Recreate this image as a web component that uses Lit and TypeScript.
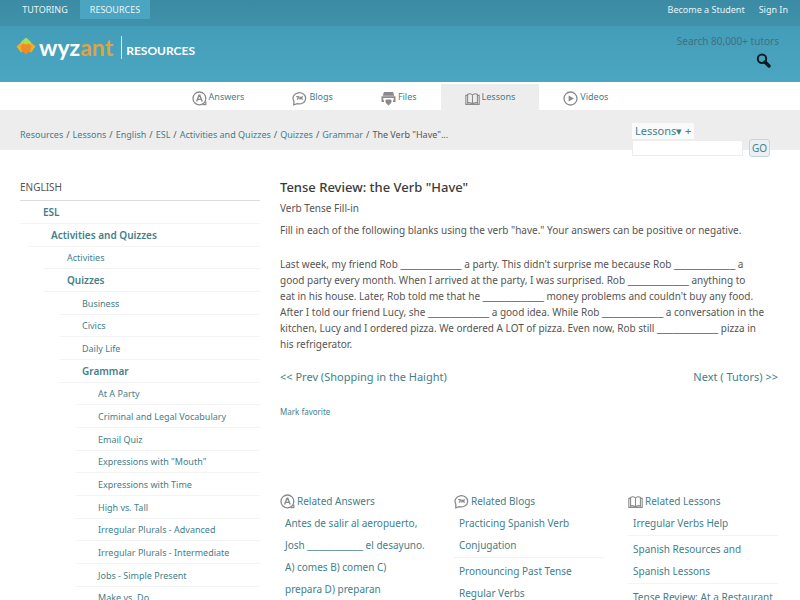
import { LitElement, html, css, svg } from "lit";
import { customElement } from "lit/decorators.js";

type Row = [level: number, label: string, bold?: boolean];

const ROWS: Row[] = [
  [0, "ESL", true],
  [1, "Activities and Quizzes", true],
  [2, "Activities"],
  [2, "Quizzes", true],
  [3, "Business"],
  [3, "Civics"],
  [3, "Daily Life"],
  [3, "Grammar", true],
  [4, "At A Party"],
  [4, "Criminal and Legal Vocabulary"],
  [4, "Email Quiz"],
  [4, "Expressions with \"Mouth\""],
  [4, "Expressions with Time"],
  [4, "High vs. Tall"],
  [4, "Irregular Plurals - Advanced"],
  [4, "Irregular Plurals - Intermediate"],
  [4, "Jobs - Simple Present"],
  [4, "Make vs. Do"],
];

const CRUMBS = ["Resources", "Lessons", "English", "ESL", "Activities and Quizzes", "Quizzes", "Grammar"];

const STORY = [
  "Last week, my friend Rob ___________ a party. This didn't surprise me because Rob ___________ a",
  "good party every month. When I arrived at the party, I was surprised. Rob ___________ anything to",
  "eat in his house. Later, Rob told me that he ___________ money problems and couldn't buy any food.",
  "After I told our friend Lucy, she ___________ a good idea. While Rob ___________ a conversation in the",
  "kitchen, Lucy and I ordered pizza. We ordered A LOT of pizza. Even now, Rob still ___________ pizza in",
  "his refrigerator.",
];

const RELATED = [
  { icon: "answers", title: "Related Answers", items: [["Antes de salir al aeropuerto,", "Josh __________ el desayuno.", "A) comes B) comen C)", "prepara D) preparan"]] },
  { icon: "blogs", title: "Related Blogs", items: [["Practicing Spanish Verb", "Conjugation"], ["Pronouncing Past Tense", "Regular Verbs"]] },
  { icon: "lessons", title: "Related Lessons", items: [["Irregular Verbs Help"], ["Spanish Resources and", "Spanish Lessons"], ["Tense Review: At a Restaurant"]] },
];

const SHAPES: Record<string, unknown> = {
  answers: svg`<circle cx="7.4" cy="7.4" r="6.4"/><path d="M10.6 13.6H13.8V10.4"/><path d="M4.6 10.6 7 4.2h.8l2.4 6.4M5.6 8.4h3.6" stroke-width="1.4"/>`,
  blogs: svg`<path d="M1.8 13.8V10A6.3 5.6 0 1 1 5.2 12.6Z"/><path d="M4.2 5.6h2v1.6L5.2 8.6M7.9 5.4v3.2M10.8 5.6 8.4 7l2.4 1.4" stroke-width="1.3"/>`,
  files: svg`<path d="M3.4 1.6h8.2l.8 2.6H2.6z" fill="currentColor"/><path d="M3 10.2H1.4V6.2h12.2v4H12" stroke-width="1.8"/><path d="M5 9h5v2.6L7.5 14 5 11.6z" fill="currentColor" stroke-width="1"/>`,
  lessons: svg`<path d="M7.5 4V13M7.5 4C6.2 2.6 3.8 2.6 2.6 3.4V12C4 11.4 6 11.6 7.5 13 9 11.6 11 11.4 12.4 12V3.4C11.2 2.6 8.8 2.6 7.5 4M2.6 4.4H.8V13.4H14.2V4.4H12.4" stroke-width="1.1"/>`,
  videos: svg`<circle cx="7.5" cy="7.5" r="6.5"/><path d="M5.6 4.4 11 7.5 5.6 10.6z" fill="currentColor" stroke="none"/>`,
};

const icon = (name: string) => html`<svg class="icon" viewBox="0 0 15 15" aria-hidden="true">${SHAPES[name]}</svg>`;

const withBlanks = (text: string) =>
  text.split(/(_+)/).map((part) => (part.startsWith("_") ? html`<span class="blank">${part}</span>` : part));

@customElement("app-root")
export class AppRoot extends LitElement {
  static styles = css`
    :host {
      display: block;
      min-height: 100vh;
      background: #fff;
      color: #555;
      font: 10px/16px "Noto Sans", "Open Sans", sans-serif;
    }
    * { box-sizing: border-box; }
    a { color: #3f808c; text-decoration: none; }
    ul, ol { list-style: none; margin: 0; padding: 0; }
    h1, h2, p { margin: 0; }
    button, input { font: inherit; }
    .icon { width: 15px; height: 15px; flex: none; fill: none; stroke: currentColor; stroke-width: 1.3; color: #8a8a8a; }

    .top { display: flex; height: 26px; padding: 0 12px 0 10px; background: linear-gradient(#3b8ba5, #4091aa); font-size: 9px; line-height: 19px; }
    .top a { color: #e8f5f8; }
    .tab { width: 70px; height: 19px; text-align: center; }
    .tab.on { background: #4ba5c0; }
    .account { display: flex; gap: 14px; margin-left: auto; }

    .brand { display: flex; justify-content: space-between; height: 56px; padding: 8px 21px 0 16px; background: linear-gradient(#439db8, #4ba6c1); }
    .logo { display: flex; height: 26px; align-items: center; color: #fff; }
    .logo svg { width: 20px; height: 20px; margin-right: 3px; }
    .word { font: 700 23px/24px Lato, sans-serif; }
    .word span { color: #dba449; }
    .section { margin-left: 8px; padding: 6px 0 0 4px; height: 23px; border-left: 1px solid #d8edf2; font: 700 12px/18px Lato, sans-serif; }
    .search { display: flex; flex-direction: column; align-items: flex-end; }
    .search input { width: 140px; height: 14px; padding: 0; border: 0; background: none; text-align: right; color: #3f6b78; }
    .search input::placeholder { color: #41707e; opacity: 1; }
    .find { width: 15px; height: 15px; margin: 5px 8px 0 0; padding: 0; border: 0; background: none; }
    .find svg { display: block; width: 15px; height: 15px; }

    .nav { display: flex; justify-content: center; height: 28px; padding-top: 2px; font-size: 9px; }
    .nav a { display: flex; align-items: center; gap: 2px; height: 26px; padding: 2px 24px 0; }
    .nav a.on { background: #ededed; }
    .nav span { padding-bottom: 2px; }

    .trail { display: flex; justify-content: space-between; height: 40px; padding: 13px 30px 0 20px; background: #ededed; font-size: 9px; line-height: 24px; }
    .trail ol, .trail li { display: flex; gap: 3px; white-space: nowrap; }
    .lookup { width: 138px; display: grid; grid-template-columns: 111px 21px; column-gap: 6px; align-content: start; align-items: center; }
    .kind { grid-column: 1 / -1; justify-self: start; height: 16px; padding: 0 3px; border: 0; background: #fafafa; color: #3f808c; font-size: 11px; line-height: 16px; }
    .lookup input { width: 100%; height: 16px; border: 1px solid #ececec; background: #fff; font-size: 10px; }
    .go { height: 18px; padding: 0; border: 1px solid #c9d3d8; border-radius: 3px; background: #eaf0f3; color: #3f808c; font-size: 10px; line-height: 16px; }

    .main { display: grid; grid-template-columns: minmax(0, 240px) minmax(0, 1fr); column-gap: 20px; padding: 28px 20px 0; }
    .side { padding-top: 1px; font-size: 9px; }
    .side h2 { height: 22px; font-size: 10px; font-weight: 400; line-height: 16px; border-bottom: 1px solid #dcdcdc; }
    .row { height: 23px; line-height: 23px; border-bottom: 1px solid #f4f4f4; }
    .row:nth-child(3n) { height: 22px; line-height: 22px; }
    .bold { font-weight: 600; font-size: 10px; }
    .l0 { padding-left: 23px; }
    .l1 { margin-left: 8px; padding-left: 23px; }
    .l2 { margin-left: 24px; padding-left: 23px; }
    .l3 { margin-left: 39px; padding-left: 23px; }
    .l4 { margin-left: 55px; padding-left: 23px; }

    h1 { font-size: 13px; font-weight: 500; line-height: 18px; color: #3a3a3a; }
    .kindline { margin-top: 4px; }
    .story { margin-top: 6px; white-space: nowrap; }
    .story p + p { margin-top: 18px; }
    .blank { font-family: "Liberation Sans", sans-serif; line-height: 1; }
    .pager { display: flex; justify-content: space-between; margin-top: 17px; padding-right: 2px; font-size: 11px; }
    .fav { display: block; margin-top: 19px; font-size: 8px; }
    .related { display: grid; grid-template-columns: repeat(3, minmax(0, 150px)); column-gap: 24px; margin-top: 70px; line-height: 22px; white-space: nowrap; }
    .related h2 { display: flex; align-items: center; gap: 2px; font-size: 10px; font-weight: 400; }
    .related li { padding-left: 5px; }
    .related li + li { margin-top: 1px; padding-top: 2px; border-top: 1px solid #f3f3f3; }
  `;

  render() {
    return html`
      <header>
        <div class="top">
          <a class="tab" href="#">TUTORING</a>
          <a class="tab on" href="#">RESOURCES</a>
          <nav class="account"><a href="#">Become a Student</a><a href="#">Sign In</a></nav>
        </div>
        <div class="brand">
          <a class="logo" href="#">
            <svg viewBox="0 0 20 20" aria-hidden="true">
              <path d="M10 1.5 19 9.5 15 15 10 12 5 15 1 9.5z" fill="#f0ad32" stroke="#f0ad32" stroke-linejoin="round"/>
              <path d="M10 1 15 5.4 12.6 7 10 6 7.4 7 5 5.4z" fill="#a9dc58" stroke="#a9dc58" stroke-linejoin="round"/>
              <path d="M5 9 7.5 7 10 8.6 12.5 7 15 9 14 13.5 10 17 6 13.5z" fill="#ef8c22" stroke="#ef8c22" stroke-linejoin="round"/>
            </svg>
            <span class="word">wyz<span>ant</span></span>
            <span class="section">RESOURCES</span>
          </a>
          <form class="search">
            <input type="text" aria-label="Search tutors" placeholder="Search 80,000+ tutors">
            <button class="find" type="button" aria-label="Search">
              <svg viewBox="0 0 15 15" fill="none" stroke="#0b1a20"><circle cx="6" cy="5.8" r="4.2" stroke-width="2"/><path d="M9 9 13 13" stroke-width="3.4" stroke-linecap="round"/></svg>
            </button>
          </form>
        </div>
      </header>
      <nav class="nav">
        ${["Answers", "Blogs", "Files", "Lessons", "Videos"].map(
          (n) => html`<a class=${n === "Lessons" ? "on" : ""} href="#">${icon(n.toLowerCase())}<span>${n}</span></a>`
        )}
      </nav>
      <div class="trail">
        <ol>${CRUMBS.map((c) => html`<li><a href="#">${c}</a><span>/</span></li>`)}<li>The Verb "Have"...</li></ol>
        <form class="lookup">
          <button class="kind" type="button">Lessons▾ +</button>
          <input type="text" aria-label="Search lessons">
          <button class="go" type="button">GO</button>
        </form>
      </div>
      <div class="main">
        <aside class="side">
          <h2>ENGLISH</h2>
          <ul>${ROWS.map(([l, t, b]) => html`<li class="row l${l} ${b ? "bold" : ""}"><a href="#">${t}</a></li>`)}</ul>
        </aside>
        <main>
          <h1>Tense Review: the Verb "Have"</h1>
          <p class="kindline">Verb Tense Fill-in</p>
          <div class="story">
            <p>Fill in each of the following blanks using the verb "have." Your answers can be positive or negative.</p>
            <p>${STORY.map((s) => html`${withBlanks(s)}<br>`)}</p>
          </div>
          <nav class="pager"><a href="#">&lt;&lt; Prev (Shopping in the Haight)</a><a href="#">Next ( Tutors) &gt;&gt;</a></nav>
          <a class="fav" href="#">Mark favorite</a>
          <div class="related">
            ${RELATED.map(
              (r) => html`<section>
                <h2>${icon(r.icon)}<a href="#">${r.title}</a></h2>
                <ul>${r.items.map((i) => html`<li><a href="#">${i.map((t, n) => html`${n ? html`<br>` : ""}${withBlanks(t)}`)}</a></li>`)}</ul>
              </section>`
            )}
          </div>
        </main>
      </div>
    `;
  }
}
